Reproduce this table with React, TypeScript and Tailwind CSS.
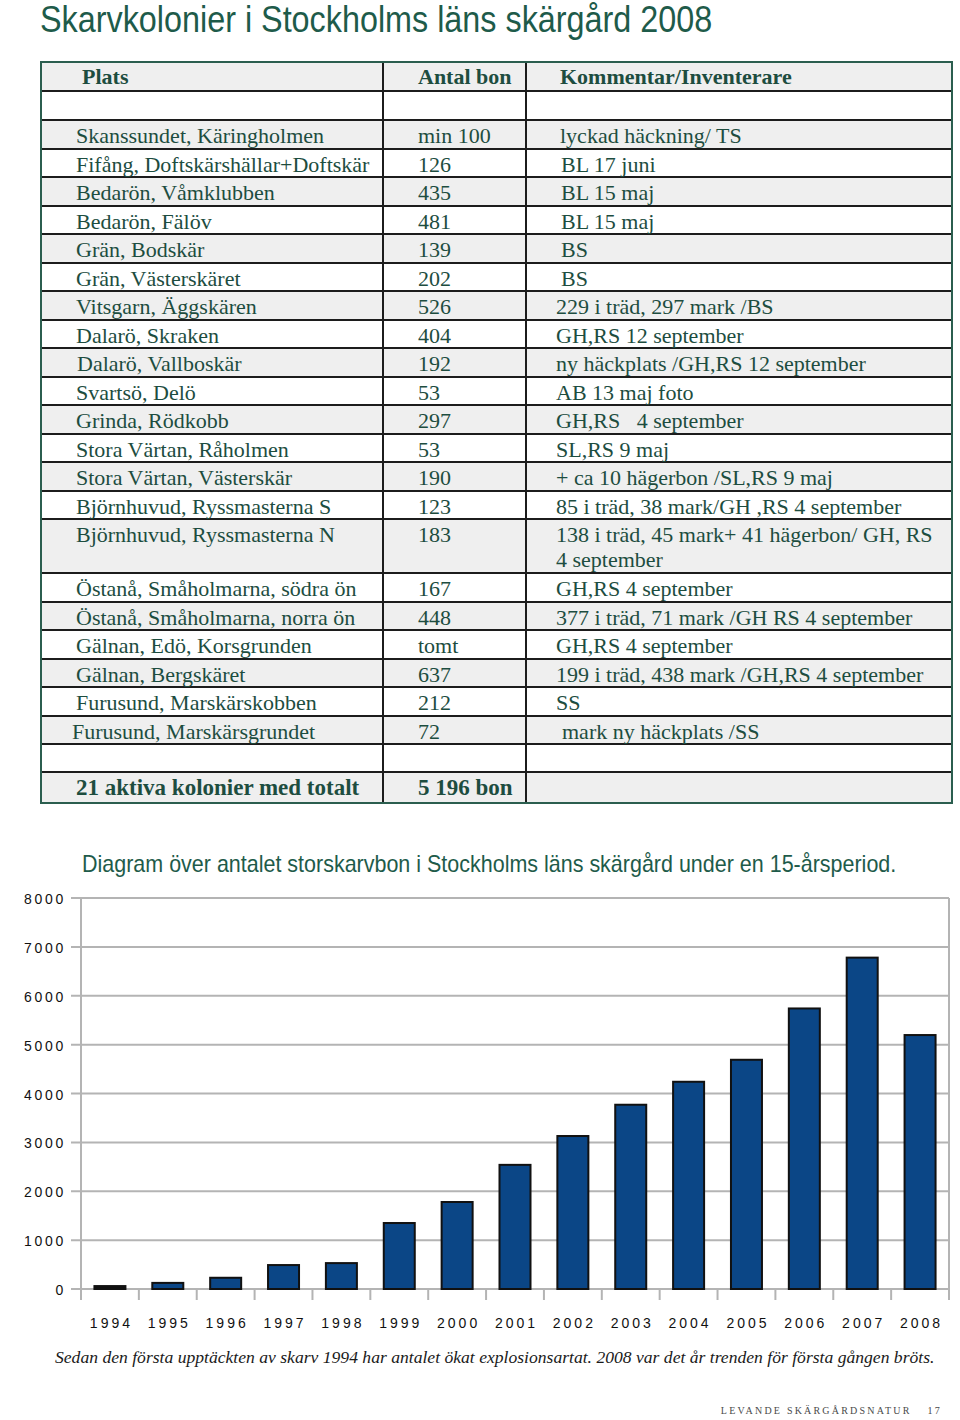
import React from "react";

type Row = { plats: string; antal: string; kommentar: React.ReactNode; pl?: string; kl?: string; tall?: boolean };

const rows: Row[] = [
  { plats: "Skanssundet, Käringholmen", antal: "min 100", kommentar: "lyckad häckning/ TS", kl: "pl-[33px]" },
  { plats: "Fifång, Doftskärshällar+Doftskär", antal: "126", kommentar: "BL 17 juni", kl: "pl-[34px]" },
  { plats: "Bedarön, Våmklubben", antal: "435", kommentar: "BL 15 maj", kl: "pl-[34px]" },
  { plats: "Bedarön, Fälöv", antal: "481", kommentar: "BL 15 maj", kl: "pl-[34px]" },
  { plats: "Grän, Bodskär", antal: "139", kommentar: "BS", kl: "pl-[34px]" },
  { plats: "Grän, Västerskäret", antal: "202", kommentar: "BS", kl: "pl-[34px]" },
  { plats: "Vitsgarn, Äggskären", antal: "526", kommentar: "229 i träd, 297 mark /BS" },
  { plats: "Dalarö, Skraken", antal: "404", kommentar: "GH,RS 12 september" },
  { plats: "Dalarö, Vallboskär", antal: "192", kommentar: "ny häckplats /GH,RS 12 september", pl: "pl-[35px]" },
  { plats: "Svartsö, Delö", antal: "53", kommentar: "AB 13 maj foto" },
  { plats: "Grinda, Rödkobb", antal: "297", kommentar: "GH,RS   4 september" },
  { plats: "Stora Värtan, Råholmen", antal: "53", kommentar: "SL,RS 9 maj" },
  { plats: "Stora Värtan, Västerskär", antal: "190", kommentar: "+ ca 10 hägerbon /SL,RS 9 maj" },
  { plats: "Björnhuvud, Ryssmasterna S", antal: "123", kommentar: "85 i träd, 38 mark/GH ,RS 4 september" },
  {
    plats: "Björnhuvud, Ryssmasterna N",
    antal: "183",
    kommentar: (
      <>
        138 i träd, 45 mark+ 41 hägerbon/ GH, RS
        <br />4 september
      </>
    ),
    tall: true,
  },
  { plats: "Östanå, Småholmarna, södra ön", antal: "167", kommentar: "GH,RS 4 september" },
  { plats: "Östanå, Småholmarna, norra ön", antal: "448", kommentar: "377 i träd, 71 mark /GH RS 4 september" },
  { plats: "Gälnan, Edö, Korsgrunden", antal: "tomt", kommentar: "GH,RS 4 september" },
  { plats: "Gälnan, Bergskäret", antal: "637", kommentar: "199 i träd, 438 mark /GH,RS 4 september" },
  { plats: "Furusund, Marskärskobben", antal: "212", kommentar: "SS" },
  { plats: "Furusund, Marskärsgrundet", antal: "72", kommentar: "mark ny häckplats /SS", pl: "pl-[30px]", kl: "pl-[35px]" },
];

const years = [1994, 1995, 1996, 1997, 1998, 1999, 2000, 2001, 2002, 2003, 2004, 2005, 2006, 2007, 2008];
const values = [60, 125, 230, 490, 530, 1350, 1780, 2540, 3130, 3770, 4240, 4690, 5740, 6780, 5196];

const cellLine = "border-l-2 border-[#1c1c1c]";

const Table = () => (
  <div className="ml-[40px] w-[913px] border-2 border-[#2b5e4f] text-[#1d4d3f] text-[22px]">
    {/* header */}
    <div className="grid grid-cols-[340px_143px_1fr] h-[29px] bg-[#efefef] border-b-2 border-[#1c1c1c] font-bold leading-[27px]">
      <div className="pl-[40px]">Plats</div>
      <div className={`${cellLine} pl-[34px]`}>Antal bon</div>
      <div className={`${cellLine} pl-[33px]`}>Kommentar/Inventerare</div>
    </div>
    <div className="grid grid-cols-[340px_143px_1fr] h-[29px] bg-white border-b-2 border-[#1c1c1c]">
      <div />
      <div className={cellLine} />
      <div className={cellLine} />
    </div>
    {rows.map((r, i) => (
      <div
        key={r.plats}
        className={`grid grid-cols-[340px_143px_1fr] border-b-2 border-[#1c1c1c] leading-[25px] ${
          r.tall ? "h-[54px]" : "h-[28.5px]"
        } ${i % 2 === 0 ? "bg-[#efefef]" : "bg-white"}`}
      >
        <div className={`${r.pl ?? "pl-[34px]"} pt-[2px] whitespace-nowrap`}>{r.plats}</div>
        <div className={`${cellLine} pl-[34px] pt-[2px]`}>{r.antal}</div>
        <div className={`${cellLine} ${r.kl ?? "pl-[29px]"} pt-[2px] whitespace-pre`}>{r.kommentar}</div>
      </div>
    ))}
    <div className="grid grid-cols-[340px_143px_1fr] h-[28px] bg-white border-b-2 border-[#1c1c1c]">
      <div />
      <div className={cellLine} />
      <div className={cellLine} />
    </div>
    <div className="grid grid-cols-[340px_143px_1fr] h-[29px] bg-[#efefef] font-bold text-[23px] leading-[29px]">
      <div className="pl-[34px]">21 aktiva kolonier med totalt</div>
      <div className={`${cellLine} pl-[34px]`}>5 196 bon</div>
      <div className={cellLine} />
    </div>
  </div>
);

const Chart = () => {
  const top = 880;
  const x0 = 81;
  const x1 = 949;
  const y0 = 1289 - top;
  const k = (1289 - 898) / 8000;
  const cat = (x1 - x0) / 15;
  const grid = [0, 1000, 2000, 3000, 4000, 5000, 6000, 7000, 8000];

  return (
    <svg width={960} height={460} className="block">
      {grid.map((g) => {
        const y = y0 - g * k;
        return (
          <g key={g}>
            <line x1={71} x2={x1} y1={y} y2={y} stroke="#b4b4b4" strokeWidth={2} />
            <text
              x={66}
              y={y + 6}
              textAnchor="end"
              fontFamily="Liberation Sans, Arial, sans-serif"
              fontSize={14}
              letterSpacing={2.7}
              fill="#111"
            >
              {g}
            </text>
          </g>
        );
      })}
      <line x1={x0} x2={x0} y1={y0 - 8000 * k} y2={y0 + 11} stroke="#b4b4b4" strokeWidth={2} />
      <line x1={x1} x2={x1} y1={y0 - 8000 * k} y2={y0 + 11} stroke="#b4b4b4" strokeWidth={2} />
      {years.map((_, i) => (
        <line
          key={i}
          x1={x0 + i * cat}
          x2={x0 + i * cat}
          y1={y0}
          y2={y0 + 11}
          stroke="#b4b4b4"
          strokeWidth={2}
        />
      ))}
      {values.map((v, i) => {
        const h = v * k;
        return (
          <rect
            key={i}
            x={x0 + i * cat + (cat - 31) / 2}
            y={y0 - h}
            width={31}
            height={h}
            fill={i === 0 ? "#111" : "#0b4686"}
            stroke="#111"
            strokeWidth={2}
          />
        );
      })}
      {years.map((yr, i) => (
        <text
          key={yr}
          x={x0 + i * cat + cat / 2 + 1.5}
          y={1328 - top}
          textAnchor="middle"
          fontFamily="Liberation Sans, Arial, sans-serif"
          fontSize={14}
          letterSpacing={3}
          fill="#111"
        >
          {yr}
        </text>
      ))}
    </svg>
  );
};

export default function App() {
  return (
    <div className="w-[960px] h-[1420px] bg-white overflow-hidden font-['Liberation_Serif',serif]">
      <h1 className="h-[61px] pl-[40px] font-['Liberation_Sans',sans-serif] text-[37px] leading-[40px] text-[#1e5b4a] whitespace-nowrap">
        <span className="inline-block origin-left scale-x-[0.874]">Skarvkolonier i Stockholms läns skärgård 2008</span>
      </h1>
      <Table />
      <div className="mt-[46px] h-[30px] pl-[82px] font-['Liberation_Sans',sans-serif] text-[24px] leading-[28px] text-[#1e5b4a] whitespace-nowrap">
        <span className="inline-block origin-left scale-x-[0.895]">
          Diagram över antalet storskarvbon i Stockholms läns skärgård under en 15-årsperiod.
        </span>
      </div>
      <Chart />
      <p className="mt-[6px] pl-[55px] text-[17.6px] leading-[22px] italic text-[#1a1a1a] whitespace-nowrap">
        Sedan den första upptäckten av skarv 1994 har antalet ökat explosionsartat. 2008 var det år trenden för första gången bröts.
      </p>
      <div className="mt-[35px] flex justify-end pr-[18px] text-[10px] leading-[16px] tracking-[2.2px] text-[#4a4a4a]">
        <span>LEVANDE SKÄRGÅRDSNATUR</span>
        <span className="ml-[16px]">17</span>
      </div>
    </div>
  );
}
